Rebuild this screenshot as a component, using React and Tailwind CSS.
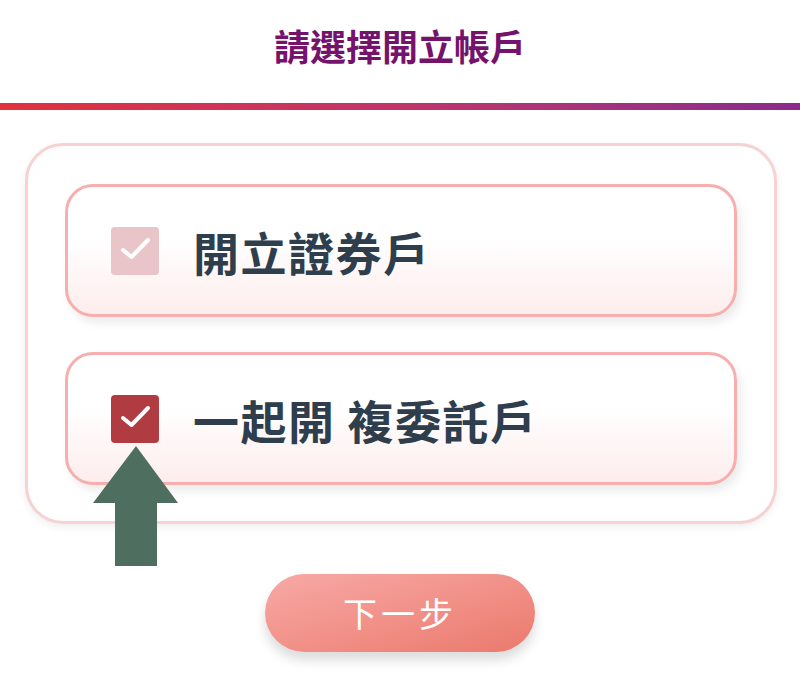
import React from "react";

const Check = ({ checked }) => (
	<div className={`flex h-[48px] w-[48px] shrink-0 items-center justify-center rounded-[4px] ${checked ? "bg-[#b03b40]" : "bg-[#e9c5c9]"}`}>
		<svg width="48" height="48" viewBox="0 0 48 48" fill="none">
			<path d="M12 23l8.5 7L37 13" stroke="white" strokeWidth="4" strokeLinecap="round" strokeLinejoin="round" />
		</svg>
	</div>
);

const Option = ({ label, checked }) => (
	<div className="flex h-[133px] items-center gap-[34px] rounded-[28px] border-[3px] border-[#f6aeae] bg-gradient-to-b from-white from-40% to-[#fdeded] pl-[43px] shadow-[4px_6px_10px_rgba(0,0,0,0.08)]">
		<Check checked={checked} />
		<span className="whitespace-pre text-[46px] font-bold leading-none tracking-[1.5px] text-[#2e3e4d]">{label}</span>
	</div>
);

export default function App() {
	return (
		<div className="relative h-[696px] w-[800px] overflow-hidden bg-white" style={{ fontFamily: '"Noto Sans CJK TC", "Noto Sans", sans-serif' }}>
			{/* Header */}
			<div className="flex h-[103px] justify-center pt-[24px]">
				<h1 className="text-[36px] font-bold leading-[42px] text-[#75136c]">請選擇開立帳戶</h1>
			</div>
			<div className="h-[7px] bg-gradient-to-r from-[#e2303b] via-[#c13569] to-[#8a2a8c]" />

			{/* Options card */}
			<div className="ml-[25px] mt-[33px] flex w-[752px] flex-col gap-[35px] rounded-[38px] border-[3px] border-[#f7d2d3] bg-white px-[37px] pb-[36px] pt-[38px] shadow-[0_3px_8px_rgba(0,0,0,0.07)]">
				<Option label="開立證券戶" checked={false} />
				<Option label="一起開 複委託戶" checked />
			</div>

			{/* Next button */}
			<div className="mt-[50px] flex justify-center">
				<button className="flex h-[78px] w-[270px] items-center justify-center rounded-full bg-gradient-to-br from-[#f7a9a6] to-[#eb796c] text-[34px] leading-none tracking-[4px] text-white shadow-[0_8px_12px_rgba(0,0,0,0.14)]">
					下一步
				</button>
			</div>

			{/* Annotation arrow */}
			<svg className="absolute left-[93px] top-[446px]" width="86" height="121" viewBox="0 0 86 121">
				<path d="M43 0L85 57H64V120H22V57H0Z" fill="#4e6f5f" />
			</svg>
		</div>
	);
}
